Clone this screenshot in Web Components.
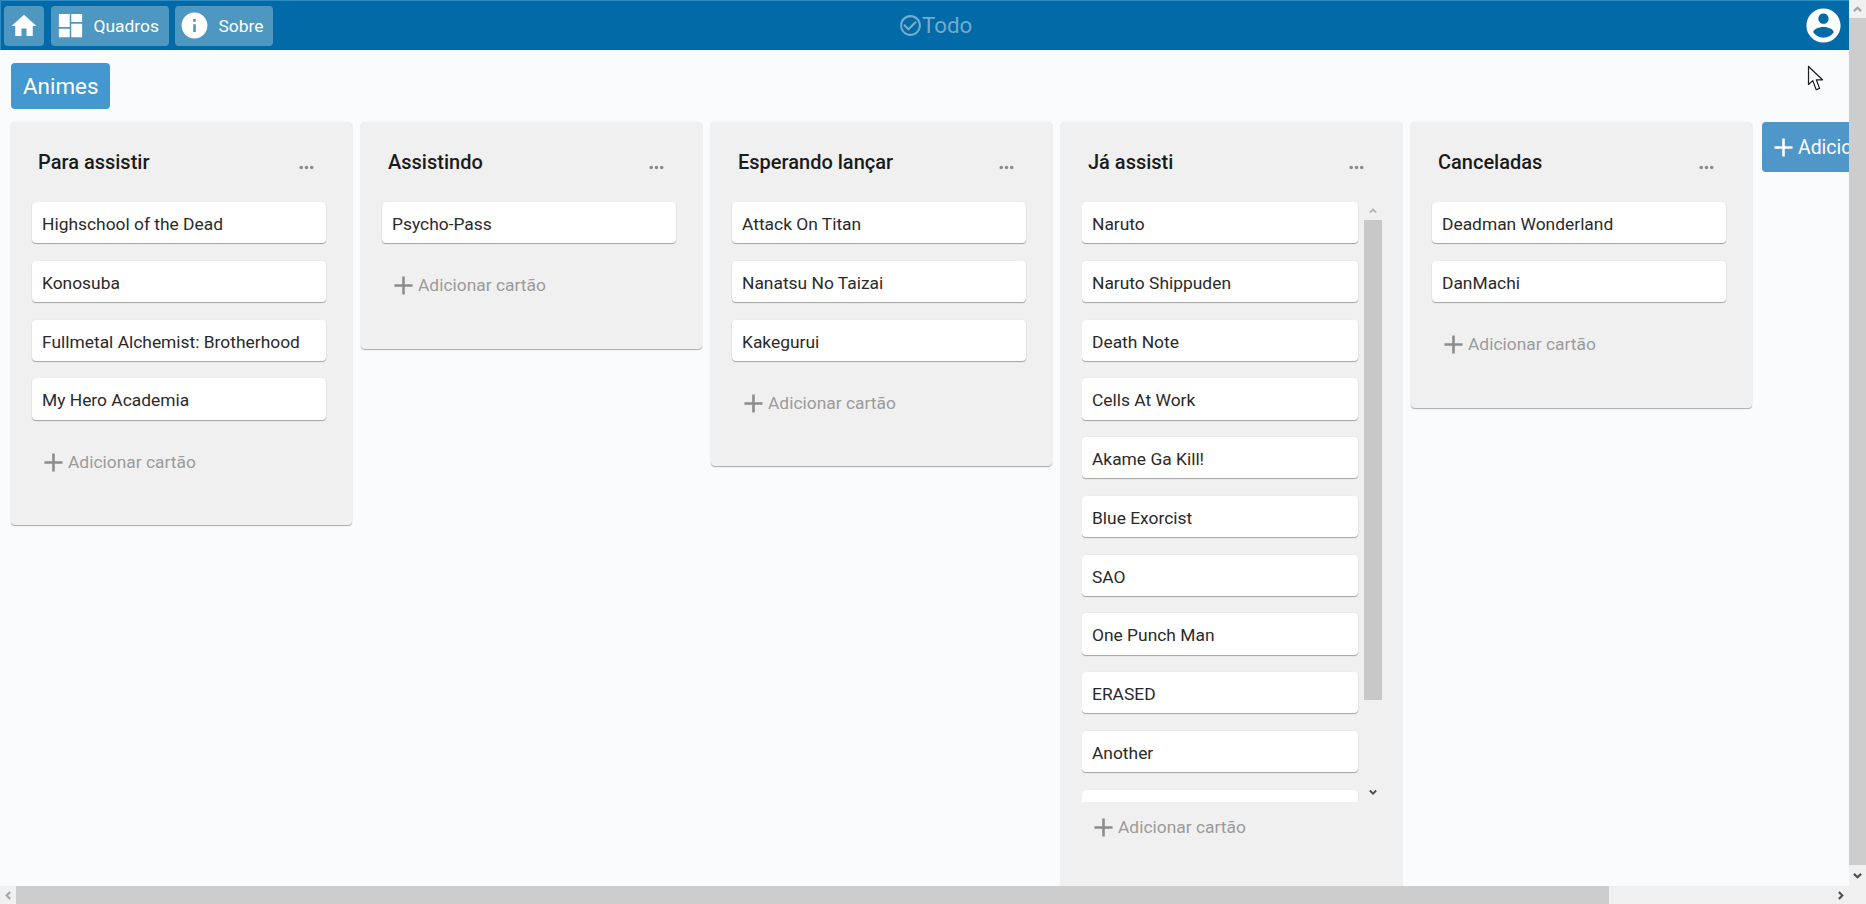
<!DOCTYPE html>
<html lang="pt-BR">
<head>
<meta charset="utf-8">
<title>Todo</title>
<style>
    html, body { margin: 0; height: 904px; overflow: hidden; }
    body { font-family: Roboto, "Liberation Sans", sans-serif; }
</style>
</head>
<body>
<app-shell>
    <top-bar></top-bar>
    <board-view titulo="Animes">
        <board-list titulo="Para assistir">
            <board-card>Highschool of the Dead</board-card>
            <board-card>Konosuba</board-card>
            <board-card>Fullmetal Alchemist: Brotherhood</board-card>
            <board-card>My Hero Academia</board-card>
        </board-list>
        <board-list titulo="Assistindo">
            <board-card>Psycho-Pass</board-card>
        </board-list>
        <board-list titulo="Esperando lançar">
            <board-card>Attack On Titan</board-card>
            <board-card>Nanatsu No Taizai</board-card>
            <board-card>Kakegurui</board-card>
        </board-list>
        <board-list titulo="Já assisti" rolagem>
            <board-card>Naruto</board-card>
            <board-card>Naruto Shippuden</board-card>
            <board-card>Death Note</board-card>
            <board-card>Cells At Work</board-card>
            <board-card>Akame Ga Kill!</board-card>
            <board-card>Blue Exorcist</board-card>
            <board-card>SAO</board-card>
            <board-card>One Punch Man</board-card>
            <board-card>ERASED</board-card>
            <board-card>Another</board-card>
            <board-card></board-card>
        </board-list>
        <board-list titulo="Canceladas">
            <board-card>Deadman Wonderland</board-card>
            <board-card>DanMachi</board-card>
        </board-list>
        <add-list></add-list>
    </board-view>
</app-shell>

<script>
const ICONES = {
    home: 'M10 20v-6h4v6h5v-8h3L12 3 2 12h3v8z',
    quadros: 'M3 3h8.4v10.2H3zM3 14.6h8.4V21H3zM12.6 3H21v6.2h-8.4zM12.6 10.6H21V21h-8.4z',
    info: 'M12 2C6.48 2 2 6.48 2 12s4.48 10 10 10 10-4.48 10-10S17.52 2 12 2zm1 15h-2v-6h2v6zm0-8h-2V7h2v2z',
    check: 'M16.59 7.58L10 14.17l-3.59-3.58L5 12l5 5 8-8zM12 2C6.48 2 2 6.48 2 12s4.48 10 10 10 10-4.48 10-10S17.52 2 12 2zm0 18c-4.42 0-8-3.58-8-8s3.58-8 8-8 8 3.58 8 8-3.58 8-8 8z',
    conta: 'M12 2C6.48 2 2 6.48 2 12s4.48 10 10 10 10-4.48 10-10S17.52 2 12 2zm0 3c1.66 0 3 1.34 3 3s-1.34 3-3 3-3-1.34-3-3 1.34-3 3-3zm0 14.2c-2.5 0-4.71-1.28-6-3.22.03-1.99 4-3.08 6-3.08 1.99 0 5.97 1.09 6 3.08-1.29 1.94-3.5 3.22-6 3.22z',
    mais: 'M19 13h-6v6h-2v-6H5v-2h6V5h2v6h6v2z',
    menu: 'M6 10c-1.1 0-2 .9-2 2s.9 2 2 2 2-.9 2-2-.9-2-2-2zm12 0c-1.1 0-2 .9-2 2s.9 2 2 2 2-.9 2-2-.9-2-2-2zm-6 0c-1.1 0-2 .9-2 2s.9 2 2 2 2-.9 2-2-.9-2-2-2z'
};

const SOMBRA = '0 1px 1px rgba(0,0,0,.32), 0 0 2px rgba(0,0,0,.05)';

const icone = (nome, tamanho) => `<svg width="${tamanho}" height="${tamanho}" viewBox="0 0 24 24" fill="currentColor"><path d="${ICONES[nome]}"/></svg>`;

class BaseElement extends HTMLElement {
    constructor () {
        super();
        this.attachShadow({ mode: 'open' });
        this.shadowRoot.innerHTML = this.render();
    }
}

class AppShell extends BaseElement {
    render() {
        return /* html */ `
            <style>
                :host { display: grid; grid-template: 886px 18px / 1849px 17px; width: 1866px; height: 904px; overflow: hidden; position: relative; }
                main { display: flex; flex-direction: column; overflow: hidden; background: #f9fbfd; }
                .cursor { position: absolute; left: 1807px; top: 65px; }
                .canto { background: #f0f0f0; }
            </style>
            <main><slot></slot></main>
            <scroll-bar orientacao="v" antes="18" barra="847" depois="21"></scroll-bar>
            <scroll-bar orientacao="h" antes="16" barra="1593" depois="240"></scroll-bar>
            <div class="canto"></div>
            <svg class="cursor" width="18" height="27" viewBox="0 0 18 27">
                <path d="M1.5 1.5V19.5L5.8 15.6L9.2 24.8L12.6 23.4L9.3 14.8H15.5Z" fill="#fbfbfb" stroke="#1c1c1c" stroke-width="1.2" stroke-linejoin="round"/>
            </svg>
        `;
    }
}

class ScrollBar extends BaseElement {
    render() {
        const v = this.getAttribute('orientacao') === 'v';
        const antes = this.getAttribute('antes');
        const barra = this.getAttribute('barra');
        const depois = this.getAttribute('depois');
        const seta = (rot, cor) => `<svg width="9" height="9" viewBox="0 0 10 10" style="transform: rotate(${rot}deg)"><path d="M1 3.2 L5 7 L9 3.2" fill="none" stroke="${cor}" stroke-width="2.4"/></svg>`;
        return /* html */ `
            <style>
                :host { display: flex; flex-direction: ${v ? 'column' : 'row'}; background: #f0f0f0; }
                .ponta { display: flex; align-items: center; justify-content: center; flex: 0 0 auto; }
                .antes { ${v ? 'height' : 'width'}: ${antes}px; }
                .depois { ${v ? 'height' : 'width'}: ${depois}px; ${v ? '' : 'justify-content: flex-end; padding-right: 4px; box-sizing: border-box;'} }
                .barra { ${v ? 'height' : 'width'}: ${barra}px; background: #cdcdcd; flex: 0 0 auto; }
            </style>
            <div class="ponta antes">${seta(v ? 180 : 90, '#a6a6a6')}</div>
            <div class="barra"></div>
            <div class="ponta depois">${seta(v ? 0 : -90, '#505050')}</div>
        `;
    }
}

class TopBar extends BaseElement {
    render() {
        return /* html */ `
            <style>
                :host { display: flex; align-items: center; flex: 0 0 50px; box-sizing: border-box; height: 50px; background: #026aa7; border-top: 1px solid #2d8cc4; border-left: 1px solid #2d8cc4; padding-right: 5px; color: #fff; }
                nav { display: flex; gap: 6.5px; padding-left: 3px; width: 269px; flex: 0 0 auto; }
                .logo { display: flex; align-items: center; color: rgba(255, 255, 255, .45); font-size: 22.3px; margin-left: 625px; }
                .logo svg { margin-right: -1px; }
                .logo span { margin-top: -2px; }
                .conta { display: flex; margin-left: auto; }
            </style>
            <nav>
                <nav-button><span slot="icone">${icone('home', 30)}</span></nav-button>
                <nav-button rotulo="Quadros"><span slot="icone">${icone('quadros', 31)}</span></nav-button>
                <nav-button rotulo="Sobre"><span slot="icone">${icone('info', 31)}</span></nav-button>
            </nav>
            <div class="logo">${icone('check', 25)}<span>Todo</span></div>
            <div class="conta">${icone('conta', 41)}</div>
        `;
    }
}

class NavButton extends BaseElement {
    render() {
        const rotulo = this.getAttribute('rotulo');
        return /* html */ `
            <style>
                :host { display: flex; align-items: center; height: 40px; box-sizing: border-box; padding: 0 ${rotulo ? '10px' : '5px'} 0 ${rotulo ? '4px' : '5px'}; border-radius: 4px; background: rgba(255, 255, 255, .3); color: #fff; font-size: 17.4px; }
                ::slotted(span) { display: flex; }
                span.rotulo { margin-left: 8px; }
            </style>
            <slot name="icone"></slot>
            ${rotulo ? `<span class="rotulo">${rotulo}</span>` : ''}
        `;
    }
}

class BoardView extends BaseElement {
    render() {
        return /* html */ `
            <style>
                :host { display: block; flex: 1; min-height: 0; padding: 13px 0 0 11px; overflow: hidden; }
                h1 { display: inline-flex; align-items: center; height: 46px; margin: 0; padding: 0 12px; border-radius: 4px; background: #4298cf; color: #fff; font-size: 22.4px; font-weight: 400; }
                .listas { display: flex; align-items: flex-start; gap: 9px; margin-top: 13px; width: 2400px; }
            </style>
            <h1>${this.getAttribute('titulo')}</h1>
            <div class="listas"><slot></slot></div>
        `;
    }
}

class BoardList extends BaseElement {
    render() {
        const rolagem = this.hasAttribute('rolagem');
        return /* html */ `
            <style>
                :host { display: block; flex: 0 0 341px; box-sizing: border-box; padding-bottom: 39px; border-radius: 4px; background: #f0f0f0; box-shadow: ${SOMBRA}; }
                header { display: flex; align-items: center; justify-content: space-between; height: 80px; padding: 0 35px 0 27px; color: #1b1b1b; }
                h2 { margin: 0; font-size: 20px; font-weight: 500; }
                header svg { color: #8a8a8a; margin-top: 11px; }
                .corpo { display: flex; padding: 0 20px 0 21px; }
                .cartoes { flex: 1; min-width: 0; ${rolagem ? 'height: 600px; overflow: hidden;' : ''} }
            </style>
            <header><h2>${this.getAttribute('titulo')}</h2>${icone('menu', 21)}</header>
            <div class="corpo">
                <div class="cartoes"><slot></slot></div>
                ${rolagem ? '<list-scroll></list-scroll>' : ''}
            </div>
            <add-card></add-card>
        `;
    }
}

class ListScroll extends BaseElement {
    render() {
        return /* html */ `
            <style>
                :host { display: flex; flex-direction: column; flex: 0 0 18px; height: 600px; }
                .ponta { display: flex; align-items: center; justify-content: center; height: 18px; }
                .barra { height: 480px; background: #c8c8c8; }
                .fim { margin-top: auto; height: 20px; }
            </style>
            <div class="ponta"><svg width="8" height="8" viewBox="0 0 10 10"><path d="M1 7 L5 3.2 L9 7" fill="none" stroke="#b4b4b4" stroke-width="2.4"/></svg></div>
            <div class="barra"></div>
            <div class="ponta fim"><svg width="8" height="8" viewBox="0 0 10 10"><path d="M1 3.2 L5 7 L9 3.2" fill="none" stroke="#505050" stroke-width="2.4"/></svg></div>
        `;
    }
}

class BoardCard extends BaseElement {
    render() {
        return /* html */ `
            <style>
                :host { display: flex; align-items: center; box-sizing: border-box; height: 41.2px; margin: 0 6px 17.6px 0; padding: 2.8px 10px 0; border-radius: 4px; background: #fff; color: #2a2a2a; font-size: 17.4px; box-shadow: ${SOMBRA}; }
            </style>
            <slot></slot>
        `;
    }
}

class AddCard extends BaseElement {
    render() {
        return /* html */ `
            <style>
                :host { display: flex; align-items: center; height: 49px; padding-left: 27px; color: #9b9b9b; font-size: 17.4px; }
                svg { color: #8c8c8c; margin-right: 0; margin-top: 1px; }
                span { margin-left: -1px; }
            </style>
            ${icone('mais', 31)}<span>Adicionar cartão</span>
        `;
    }
}

class AddList extends BaseElement {
    render() {
        return /* html */ `
            <style>
                :host { display: flex; align-items: center; flex: 0 0 auto; box-sizing: border-box; height: 50px; width: 230px; margin-left: 1px; padding-left: 6px; border-radius: 4px; background: #4e97c8; color: #fff; font-size: 19.4px; }
                span { margin-left: -1px; }
            </style>
            ${icone('mais', 31)}<span>Adicionar lista</span>
        `;
    }
}

customElements.define('app-shell', AppShell);
customElements.define('scroll-bar', ScrollBar);
customElements.define('top-bar', TopBar);
customElements.define('nav-button', NavButton);
customElements.define('board-view', BoardView);
customElements.define('board-list', BoardList);
customElements.define('list-scroll', ListScroll);
customElements.define('board-card', BoardCard);
customElements.define('add-card', AddCard);
customElements.define('add-list', AddList);
</script>
</body>
</html>
